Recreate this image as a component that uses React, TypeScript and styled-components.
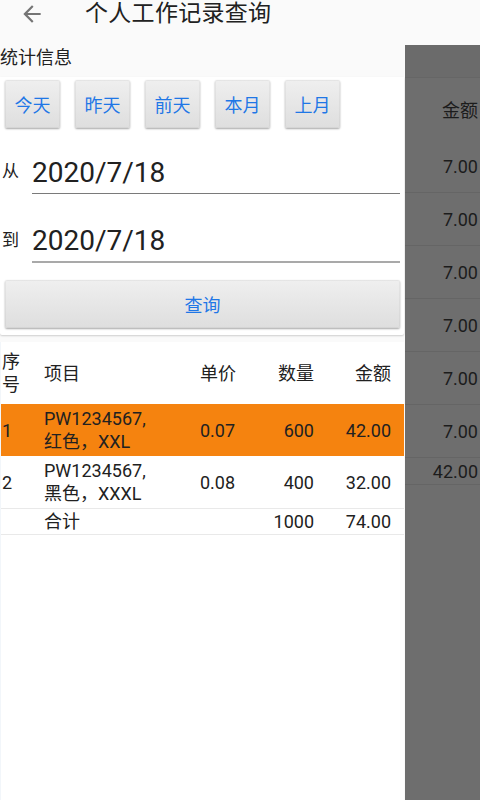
import React from "react";
import styled, { createGlobalStyle } from "styled-components";

const GlobalStyle = createGlobalStyle`
  html, body { margin: 0; padding: 0; }
  body {
    font-family: Roboto, "Noto Sans CJK SC", sans-serif;
    background: #fafafa;
    color: #212121;
  }
`;

const Screen = styled.div`
  position: relative;
  width: 480px;
  height: 800px;
  overflow: hidden;
  background: #fafafa;
  display: flex;
  flex-direction: column;
`;

const AppBar = styled.div`
  height: 45px;
  flex: none;
  display: flex;
  align-items: flex-start;
  background: #fafafa;
`;

const BackButton = styled.div`
  width: 64px;
  height: 28px;
  display: flex;
  align-items: center;
  padding-left: 19px;
  box-sizing: border-box;
`;

const Title = styled.div`
  margin-left: 21px;
  font-size: 23px;
  line-height: 28px;
  color: #212121;
  letter-spacing: 0.3px;
`;

const Content = styled.div`
  width: 404px;
  flex: 1;
  display: flex;
  flex-direction: column;
`;

const SectionLabel = styled.div`
  font-size: 18px;
  line-height: 26px;
  margin-bottom: 6px;
  color: #212121;
`;

const Card = styled.div`
  background: #fff;
  box-shadow: 0 1px 2px rgba(0, 0, 0, 0.18);
  border-radius: 0 0 2px 2px;
  padding: 3px 4px 7px 5px;
  display: flex;
  flex-direction: column;
  margin-bottom: 7px;
`;

const QuickRow = styled.div`
  display: flex;
  gap: 15px;
`;

const RaisedButton = styled.button<{ $wide?: boolean }>`
  width: ${(p) => (p.$wide ? "100%" : "55px")};
  height: 48px;
  border: none;
  border-radius: 2px;
  background: linear-gradient(#efefef, #dedede);
  box-shadow: 0 1px 2px rgba(0, 0, 0, 0.35), inset 0 0 0 1px rgba(0, 0, 0, 0.04);
  color: #1f77e6;
  font-family: Roboto, "Noto Sans CJK SC", sans-serif;
  font-size: 18px;
  padding: 0;
  display: flex;
  align-items: center;
  justify-content: center;
`;

const Field = styled.div<{ $top: number }>`
  display: flex;
  align-items: center;
  margin-top: ${(p) => p.$top}px;
  margin-left: -3px;
`;

const FieldLabel = styled.div`
  width: 30px;
  font-size: 17px;
  color: #212121;
`;

const DateInput = styled.div<{ $line: string; $thick: number }>`
  flex: 1;
  font-size: 28px;
  line-height: 40px;
  height: 40px;
  padding-top: 8px;
  color: #212121;
  border-bottom: ${(p) => p.$thick}px solid ${(p) => p.$line};
`;

const QueryWrap = styled.div`
  margin-top: 17px;
`;

const TableArea = styled.div`
  flex: 1;
  background: #fff;
  border-left: 1px solid #f2f6fa;
`;

const Table = styled.div`
  display: grid;
  grid-template-columns: 43px 156px 60px 54px 77px 13px;
  font-size: 18px;
  line-height: 23px;
  color: #212121;
`;

const Row = styled.div<{ $bg?: string; $h: number; $border?: boolean }>`
  display: contents;
  & > div {
    background: ${(p) => p.$bg || "#fff"};
    height: ${(p) => p.$h}px;
    border-bottom: ${(p) => (p.$border ? "1px solid #e9e9e9" : "none")};
  }
`;

const Cell = styled.div<{ $align?: "left" | "right"; $pad?: number }>`
  display: flex;
  align-items: center;
  justify-content: ${(p) => (p.$align === "right" ? "flex-end" : "flex-start")};
  padding-left: ${(p) => p.$pad ?? 0}px;
  white-space: pre-line;
`;

const Panel = styled.div`
  position: absolute;
  left: 405px;
  top: 45px;
  width: 75px;
  bottom: 0;
  background: #6e6e6e;
  display: flex;
  flex-direction: column;
  font-size: 18px;
  color: #1c1c1c;
`;

const PanelTop = styled.div`
  height: 32px;
  flex: none;
  border-bottom: 1px solid #666;
  background: #6b6b6b;
`;

const PanelRow = styled.div<{ $h: number; $border?: boolean }>`
  height: ${(p) => p.$h}px;
  flex: none;
  box-sizing: border-box;
  display: flex;
  align-items: center;
  justify-content: flex-end;
  padding-right: 2px;
  border-bottom: ${(p) => (p.$border ? "1px solid #656565" : "none")};
`;

const BackIcon = () => (
  <svg width="26" height="26" viewBox="0 0 24 24">
    <path d="M20 11H7.83l5.59-5.59L12 4l-8 8 8 8 1.41-1.41L7.83 13H20v-2z" fill="#757575" />
  </svg>
);

const rows = [
  { no: "1", item: "PW1234567,\n红色，XXL", price: "0.07", qty: "600", amt: "42.00", bg: "#f5830f" },
  { no: "2", item: "PW1234567,\n黑色，XXXL", price: "0.08", qty: "400", amt: "32.00" },
];

export default function App() {
  return (
    <>
      <GlobalStyle />
      <Screen>
        <AppBar>
          <BackButton>
            <BackIcon />
          </BackButton>
          <Title>个人工作记录查询</Title>
        </AppBar>
        <Content>
          <SectionLabel>统计信息</SectionLabel>
          <Card>
            <QuickRow>
              {["今天", "昨天", "前天", "本月", "上月"].map((t) => (
                <RaisedButton key={t}>{t}</RaisedButton>
              ))}
            </QuickRow>
            <Field $top={17}>
              <FieldLabel>从</FieldLabel>
              <DateInput $line="#7a7a7a" $thick={1}>2020/7/18</DateInput>
            </Field>
            <Field $top={19}>
              <FieldLabel>到</FieldLabel>
              <DateInput $line="#a9a9a9" $thick={2}>2020/7/18</DateInput>
            </Field>
            <QueryWrap>
              <RaisedButton $wide>查询</RaisedButton>
            </QueryWrap>
          </Card>
          <TableArea>
            <Table>
              <Row $h={62}>
                <Cell $pad={1}>{"序\n号"}</Cell>
                <Cell>项目</Cell>
                <Cell>单价</Cell>
                <Cell $align="right">数量</Cell>
                <Cell $align="right">金额</Cell>
                <Cell />
              </Row>
              {rows.map((r, i) => (
                <Row key={r.no} $h={52} $bg={r.bg} $border={i === 1}>
                  <Cell $pad={1}>{r.no}</Cell>
                  <Cell>{r.item}</Cell>
                  <Cell>{r.price}</Cell>
                  <Cell $align="right">{r.qty}</Cell>
                  <Cell $align="right">{r.amt}</Cell>
                  <Cell />
                </Row>
              ))}
              <Row $h={25} $border>
                <Cell />
                <Cell>合计</Cell>
                <Cell />
                <Cell $align="right">1000</Cell>
                <Cell $align="right">74.00</Cell>
                <Cell />
              </Row>
            </Table>
          </TableArea>
        </Content>
        <Panel>
          <PanelTop />
          <PanelRow $h={62}>金额</PanelRow>
          {[0, 1, 2, 3, 4, 5].map((i) => (
            <PanelRow key={i} $h={53} $border>
              7.00
            </PanelRow>
          ))}
          <PanelRow $h={27} $border>
            42.00
          </PanelRow>
        </Panel>
      </Screen>
    </>
  );
}
